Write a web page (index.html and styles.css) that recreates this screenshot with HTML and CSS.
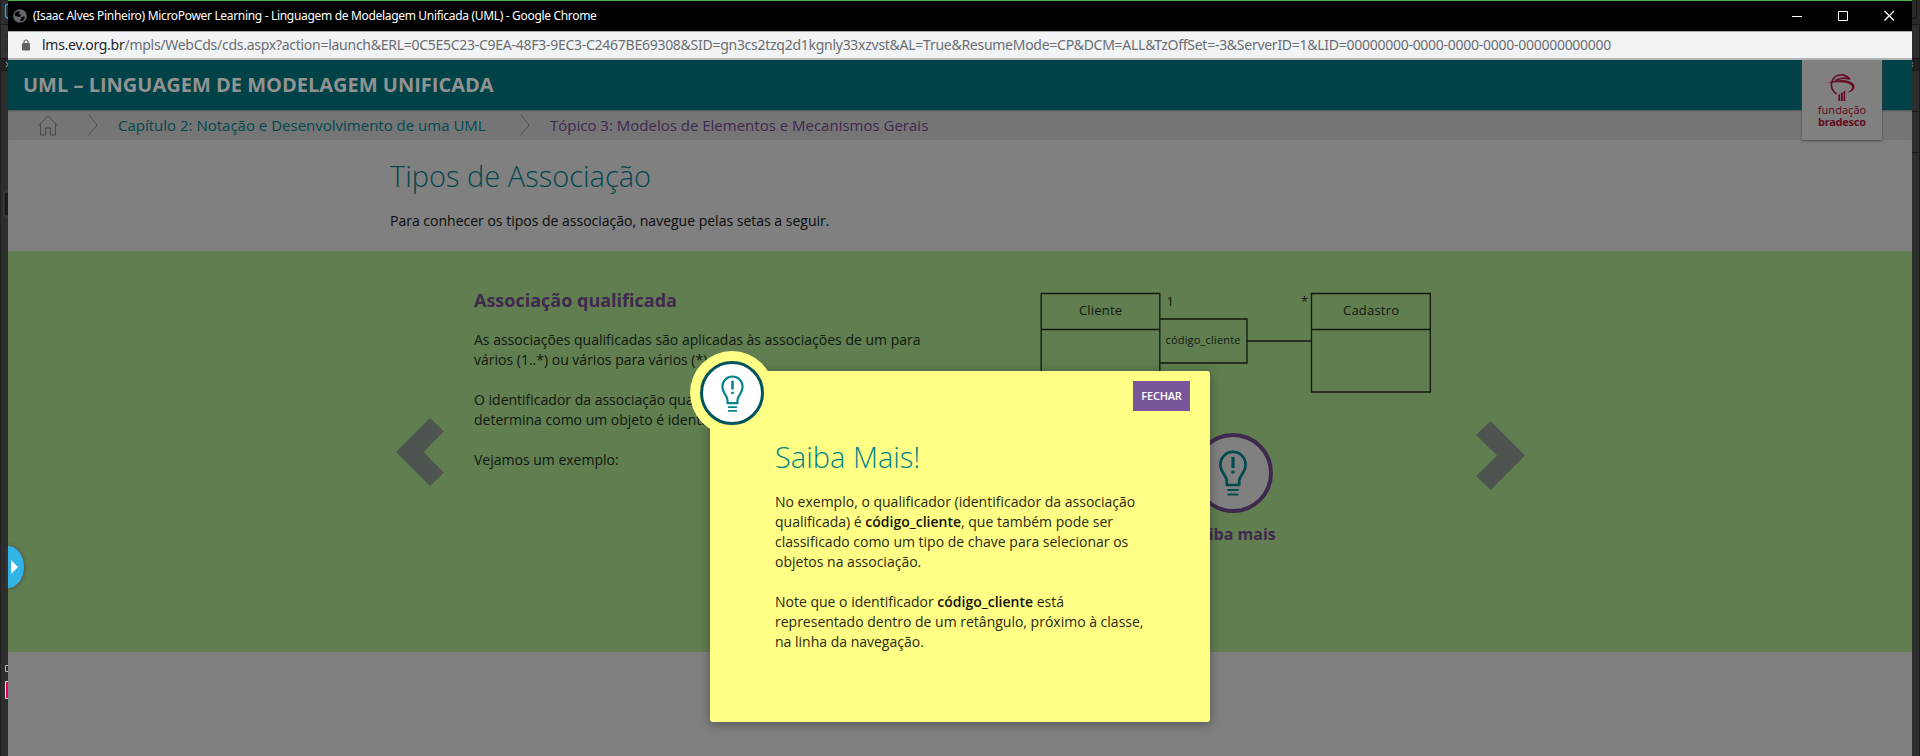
FILE: index.html
```
<!DOCTYPE html>
<html lang="pt-BR">
<head>
<meta charset="utf-8">
<title>MicroPower Learning - Linguagem de Modelagem Unificada (UML)</title>
<link rel="stylesheet" href="styles.css">
</head>
<body>
<svg width="0" height="0" class="defs">
  <symbol id="bulb" viewBox="0 0 28 46">
    <path d="M7.800 35V31C7.800 25.500 1.400 23 1.400 14.500a12.600 12.600 0 0 1 25.200 0C26.600 23 20.200 25.500 20.200 31v4z" stroke-linejoin="round"/>
    <path d="M14 7v11M14 20.800v2.700" stroke-width="3.200"/>
    <path d="M8.500 40h11M8.500 44.500h11" stroke-width="2.200"/>
  </symbol>
</svg>
<div class="desktop">
  <aside class="strip strip-left">
    <svg width="8" height="756" viewBox="0 0 8 756">
      <path d="M0 24H8V58H0z" fill="#333"/><path d="M0 0h1v756H0z" fill="#202020"/>
      <path d="M0 24.500h8M0 58.500h8M0 70.500h8" stroke="#191919"/><path d="M0 59H8V70H0z" fill="#232323"/>
      <path d="M8 4.500H7.500Q5.500 4.500 5.500 7v8q0 3 2.500 3" fill="none" stroke="#2aa5d8" stroke-width="1.300"/>
      <path d="M6 62l2 2.500-2 2.500" fill="none" stroke="#aaa"/>
      <path d="M5.500 34v18M7.500 34v18" stroke="#222" stroke-dasharray="1 1"/>
      <path d="M8 192H6q-2 0-2 2v20q0 2 2 2h2" fill="#191919" stroke="#444"/>
      <path d="M8 665.500H5.500v6H8" fill="none" stroke="#bbb"/>
      <path d="M8 681.500H5.500v17H8" fill="#e5005a" stroke="#ddd"/>
    </svg>
  </aside>
  <div class="window">
    <header class="titlebar">
      <svg class="globe" width="14" height="14" viewBox="0 0 14 14"><circle cx="7" cy="7" r="6.800" fill="#63676b"/><path d="M2 4l3-2 2 1-1 2 2 1-1 2-3-.5-2-1zM8 8l3-.5 1 1-2 3-2 1-1-2 1.500-1z" fill="#050505"/></svg>
      <span class="win-title">(Isaac Alves Pinheiro) MicroPower Learning - Linguagem de Modelagem Unificada (UML) - Google Chrome</span>
      <svg class="controls" width="104" height="12" viewBox="0 0 104 12" fill="none" stroke="#fff"><path d="M0 6.500h10M46.500 1.500h9v9h-9z"/><path d="M92.500 1l9.500 9.500M102 1l-9.500 9.500" stroke-width="1.300"/></svg>
    </header>
    <div class="urlbar">
      <svg width="8" height="12" viewBox="0 0 8 12"><rect y="4" width="8" height="7.500" rx="1" fill="#5f6368"/><path d="M2 5V3a2 2 0 0 1 4 0v2" fill="none" stroke="#5f6368" stroke-width="1.200"/></svg>
      <span class="url"><b>lms.ev.org.br</b>/mpls/WebCds/cds.aspx?action=launch&amp;ERL=0C5E5C23-C9EA-48F3-9EC3-C2467BE69308&amp;SID=gn3cs2tzq2d1kgnly33xzvst&amp;AL=True&amp;ResumeMode=CP&amp;DCM=ALL&amp;TzOffSet=-3&amp;ServerID=1&amp;LID=00000000-0000-0000-0000-000000000000</span>
    </div>
    <main class="page">
      <div class="course"><h1>UML – LINGUAGEM DE MODELAGEM UNIFICADA</h1></div>
      <nav class="crumbs">
        <svg class="home" width="20" height="21" viewBox="0 0 20 21" fill="none" stroke="#484848"><path d="M.7 10.500L10 1l9.300 9.500M2.500 9v11h5v-7h5v7h5V9"/></svg>
        <svg class="sep" width="10" height="22" viewBox="0 0 10 22" fill="none" stroke="#505050"><path d="M.5.500l8.500 10.500-8.500 10.500"/></svg>
        <span class="chapter">Capítulo 2: Notação e Desenvolvimento de uma UML</span>
        <svg class="sep sep2" width="10" height="22" viewBox="0 0 10 22" fill="none" stroke="#505050"><path d="M.5.500l8.500 10.500-8.500 10.500"/></svg>
        <span class="topic">Tópico 3: Modelos de Elementos e Mecanismos Gerais</span>
      </nav>
      <section class="intro">
        <h2>Tipos de Associação</h2>
        <p>Para conhecer os tipos de associação, navegue pelas setas a seguir.</p>
      </section>
      <section class="slide">
        <svg class="prev" width="48" height="68" viewBox="0 0 48 68"><path d="M34 0L0 34l34 34 14-13.500L27.500 34 48 13.500z" fill="#4e544f"/></svg>
        <article>
          <h3>Associação qualificada</h3>
          <p>As associações qualificadas são aplicadas às associações de um para<br>vários (1..*) ou vários para vários (*).</p>
          <p>O identificador da associação qualificada<br>determina como um objeto é identificado.</p>
          <p>Vejamos um exemplo:</p>
        </article>
        <div class="example">
          <svg class="uml" width="391" height="101" viewBox="0 0 391 101" fill="none" stroke="#10180e" stroke-width="1.300">
            <path d="M1.200 1.500h118.600v98.500H1.200zM1.200 37.500h118.600M271.500 1.500h118.800v98.500H271.500zM271.500 37.500h118.800M119.800 27H207v44h-87.200M207 49h64.500"/>
            <g class="uml-text"><text x="39" y="23" textLength="43">Cliente</text><text x="126.500" y="14">1</text><text x="261" y="14">*</text><text x="303" y="23" textLength="56">Cadastro</text><text class="small" x="125.500" y="52" textLength="75">código_cliente</text></g>
          </svg>
          <div class="more"><span class="more-ring"><svg width="28" height="46"><use href="#bulb"/></svg></span><strong>Saiba mais</strong></div>
        </div>
        <svg class="next" width="49" height="69" viewBox="0 0 49 69"><path d="M14.500 0L49 34.500 14.500 69 0 55l21-20.500L0 14z" fill="#4e544f"/></svg>
      </section>
      <div class="logo">
        <svg width="30" height="28" viewBox="0 0 30 28"><path d="M0 9Q13 4 23 7.500C30 10.500 29 17 20 19Q26 15 25 12.500C23 8 12 7.500 0 9z" fill="#660c22"/><path d="M23 5.500Q19 .3 13 1C6 2 4 8 4.500 12q.6 5 5 8M8.500 6.500Q15 2.500 22 5" fill="none" stroke="#660c22" stroke-width="1.700"/><path d="M11.300 21l1.700-1v7h-1.700zM13.800 19.500l2-1.500v9h-2zM16.500 17.500l1.800-1V27h-1.800z" fill="#660c22"/></svg>
        <span>fundação</span><b>bradesco</b>
      </div>
      <button class="tab" aria-label="Abrir menu"><svg width="7" height="14"><path d="M0 0l7 7-7 7z" fill="#fff"/></svg></button>
    </main>
  </div>
  <aside class="strip strip-right">
    <svg width="8" height="756" viewBox="0 0 8 756"><path d="M0 0h8v24H0z" fill="#292929"/><path d="M0 59h8v11H0z" fill="#202020"/><path d="M0 24.500h8M0 58.500h8M0 70.500h8M0 111.500h8M0 152.500h8" stroke="#181818"/><path d="M0 18.500h2q2.500 0 2.500-2V0M7.500 24v732" fill="none" stroke="#1a1a1a"/><path d="M0 63h1M0 66h1" stroke="#aaa"/></svg>
  </aside>
  <div class="dialog" role="dialog">
    <span class="badge"><span class="badge-ring"><svg width="23" height="37"><use href="#bulb"/></svg></span></span>
    <button class="close">FECHAR</button>
    <h2>Saiba Mais!</h2>
    <p>No exemplo, o qualificador (identificador da associação<br>qualificada) é <b>código_cliente</b>, que também pode ser<br>classificado como um tipo de chave para selecionar os<br>objetos na associação.</p>
    <p>Note que o identificador <b>código_cliente</b> está<br>representado dentro de um retângulo, próximo à classe,<br>na linha da navegação.</p>
  </div>
</div>
</body>
</html>
```
FILE: styles.css
```
* { box-sizing: border-box; }
body { margin: 0; font-family: "Open Sans", sans-serif; overflow: hidden; }
h1, h2, h3, p { margin: 0; }
svg { display: block; flex: none; }
.defs { position: absolute; }
button { border: 0; padding: 0; font-family: inherit; }
.desktop { position: relative; display: flex; width: 1920px; height: 756px; background: #2d2d2d; }
.strip { width: 8px; }
.window { width: 1904px; height: 756px; display: flex; flex-direction: column; }

.titlebar { height: 31px; background: #000; border-top: 1px solid #4db848; display: flex; align-items: center; padding: 0 16px 0 5px; color: #fff; }
.win-title { margin-left: 6px; font: 12px/16px "Noto Sans", sans-serif; letter-spacing: -0.32px; white-space: nowrap; }
.controls { margin-left: auto; }
.urlbar { height: 29px; background: #f1f3f5; border-top: 1px solid #a7a7a7; border-bottom: 2px solid #b2b4b5; display: flex; align-items: center; padding-left: 14px; }
.url { margin-left: 12px; font: 14px/18px "Noto Sans", sans-serif; letter-spacing: -0.27px; color: #6b6e72; white-space: nowrap; }
.url b { font-weight: 400; color: #25272a; }

.page { position: relative; height: 696px; background: #808080; display: flex; flex-direction: column; }
.course { height: 50px; background: #004248; padding-left: 15px; display: flex; align-items: center; }
.course h1 { font-size: 20px; line-height: 28px; color: #929292; font-weight: 700; white-space: nowrap; }
.crumbs { height: 30px; background: #757575; box-shadow: inset 0 2px 2px -1px #555; display: flex; align-items: center; padding-left: 30px; font-size: 15px; white-space: nowrap; }
.crumbs .sep { margin-left: 30px; }
.chapter { margin-left: 20px; color: #004a50; width: 369px; }
.crumbs .sep2 { margin-left: 33px; }
.topic { margin-left: 20px; color: #40294f; }
.intro { height: 111px; padding: 16px 0 0 382px; color: #0b0b0b; }
.intro h2 { font-size: 29px; line-height: 40px; font-weight: 300; color: #00484e; }
.intro p { font-size: 14px; line-height: 20px; margin-top: 15px; }

.slide { height: 401px; background: #607e50; display: flex; align-items: flex-start; padding-left: 388px; color: #10180e; }
.prev { margin-top: 167px; }
.slide article { width: 567px; padding: 37px 0 0 30px; }
.slide h3 { font-size: 18px; line-height: 24px; color: #40294f; font-weight: 700; margin-bottom: 18px; }
.slide p { font-size: 14px; line-height: 20px; margin-bottom: 20px; white-space: nowrap; }
.example { width: 391px; margin: 41px 0 0 29px; }
.uml-text { font-size: 13px; fill: #10180e; stroke: none; }
.uml-text .small { font-size: 11px; }
.more { display: flex; flex-direction: column; align-items: center; width: 110px; margin: 40px 0 0 138px; }
.more-ring { width: 80px; height: 80px; border: 4px solid #40294f; border-radius: 50%; background: #808080; display: grid; place-items: center; color: #004a50; }
.more-ring use, .badge-ring use { fill: none; stroke: currentColor; stroke-width: 2.7; }
.more strong { margin-top: 10px; font-size: 16px; line-height: 22px; color: #40294f; }
.next { margin: 170px 0 0 45px; }

.logo { position: absolute; left: 1794px; top: 0; width: 80px; height: 80px; background: #808080; box-shadow: 0 1px 2px #444; color: #660c22; display: flex; flex-direction: column; align-items: center; padding-top: 14px; font-family: "Noto Sans", sans-serif; font-size: 11px; line-height: 12px; }
.logo span { margin-top: 2px; }
.logo b { letter-spacing: -0.25px; }
.tab { position: absolute; left: 0; top: 486px; width: 16px; height: 42px; background: #32b4e8; border-radius: 0 16px 16px 0 / 0 21px 21px 0; box-shadow: 0 0 4px #444; display: flex; align-items: center; padding-left: 3px; }

.dialog { position: absolute; left: 710px; top: 371px; width: 500px; height: 351px; background: #ffff85; border-radius: 3px; box-shadow: 0 2px 12px rgba(0,0,0,.35); padding: 66px 0 0 65px; color: #292914; }
.dialog h2 { font-size: 29px; line-height: 40px; font-weight: 300; color: #00848a; }
.dialog p { font-size: 14px; line-height: 20px; margin: 15px 0 20px; white-space: nowrap; }
.dialog p b { font-weight: 600; color: #111108; }
.dialog p + p { margin-top: 0; }
.badge { position: absolute; left: -20px; top: -20px; width: 84px; height: 84px; border-radius: 50%; background: #ffff85; display: grid; place-items: center; }
.badge-ring { width: 64px; height: 64px; border: 3px solid #00525c; border-radius: 50%; background: #fff; display: grid; place-items: center; color: #00848a; }
.close { position: absolute; right: 20px; top: 10px; width: 57px; height: 30px; padding-bottom: 1px; background: #795499; color: #fff; font-size: 11px; font-weight: 600; letter-spacing: -0.2px; }
```
